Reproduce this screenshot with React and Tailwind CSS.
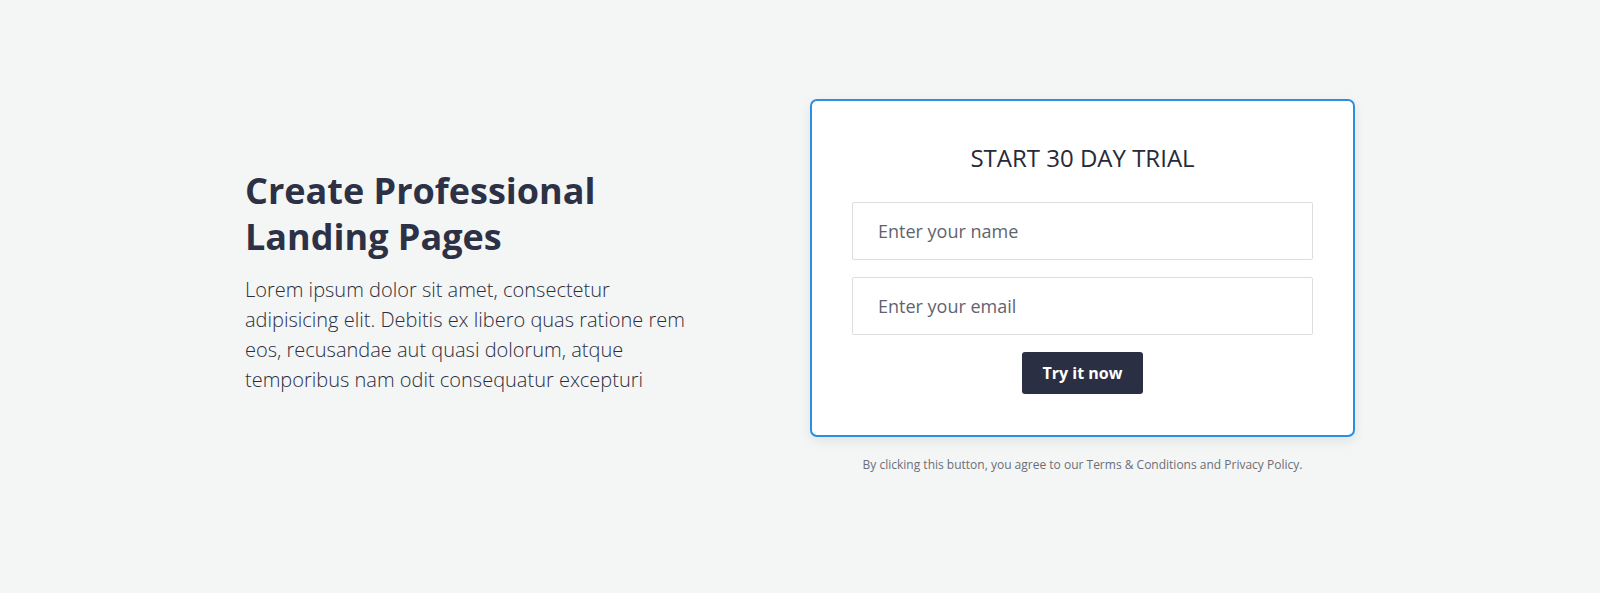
export default function App() {
  return (
    <div
      className="w-full h-[593px] bg-[#f4f5f5] flex justify-center"
      style={{ fontFamily: '"Open Sans", "Liberation Sans", sans-serif' }}
    >
      <div className="w-[1110px] flex justify-between items-start pt-[99px]">
        <div className="w-[460px] pt-[69px]">
          <h1 className="text-[36px] leading-[46px] font-bold text-[#2c3145]">
            Create Professional
            <br />
            Landing Pages
          </h1>
          <p className="mt-[15px] text-[20px] leading-[30px] font-light text-[#2a2e40]">
            Lorem ipsum dolor sit amet, consectetur adipisicing elit. Debitis ex libero quas ratione rem eos, recusandae aut quasi dolorum, atque temporibus nam odit consequatur excepturi
          </p>
        </div>
        <div className="w-[545px] flex flex-col items-center">
          <div className="w-full bg-white border-2 border-[#2b8ee0] rounded-[7px] shadow-[0_4px_12px_rgba(0,0,0,0.08)] px-[40px] pt-[42px] pb-[41px] flex flex-col items-center">
            <h2 className="text-[24px] leading-[30px] text-[#262a3a] font-normal">
              START 30 DAY TRIAL
            </h2>
            <input
              type="text"
              placeholder="Enter your name"
              className="mt-[29px] w-full h-[58px] border border-[#dcdde0] rounded-[2px] px-[25px] text-[18px] text-[#555a66] placeholder:text-[#5f6470] outline-none"
            />
            <input
              type="email"
              placeholder="Enter your email"
              className="mt-[17px] w-full h-[58px] border border-[#dcdde0] rounded-[2px] px-[25px] text-[18px] text-[#555a66] placeholder:text-[#5f6470] outline-none"
            />
            <button className="mt-[17px] w-[121px] h-[42px] bg-[#2b2f43] text-white font-bold text-[16px] rounded-[3px]">
              Try it now
            </button>
          </div>
          <p className="mt-[19px] text-[12px] text-[#6b6f78]">
            By clicking this button, you agree to our Terms &amp; Conditions and Privacy Policy.
          </p>
        </div>
      </div>
    </div>
  );
}
